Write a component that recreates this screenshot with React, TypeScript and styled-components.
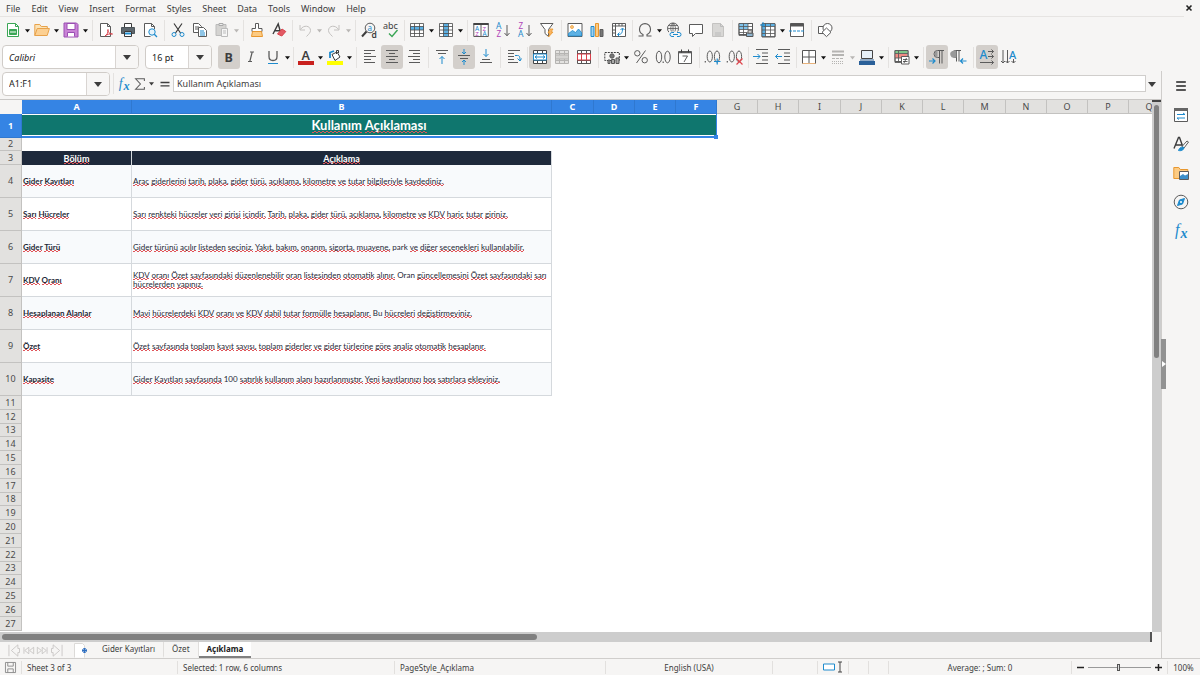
import React from "react";
import styled, { createGlobalStyle, css } from "styled-components";

const ui = '"Noto Sans", sans-serif';
const cellFont = 'Lato, sans-serif';
const ink = "#3d3d3d";
const grey = "#5b5b5b";
const blue = "#1e8bcd";
const accent = "#3584e4";

const GlobalStyle = createGlobalStyle`
  * { box-sizing: border-box; }
  body { margin: 0; background: #f6f5f4; font-family: ${ui}; font-size: 9px; color: ${ink}; overflow: hidden; }
  button, input { font: inherit; color: inherit; }
  button { margin: 0; padding: 0; border: 0; background: none; }
  svg { overflow: visible; }
`;

const Shell = styled.div`
  display: flex;
  flex-direction: column;
  height: 100vh;
`;

const MenuBar = styled.nav`
  display: flex;
  align-items: center;
  gap: 1px;
  height: 17px;
  margin-right: 16px;
  padding-left: 1px;
  border-bottom: 1px solid #e6e4e2;
`;
const MenuItem = styled.button`
  padding: 1px 5px 0;
  line-height: 16px;
`;
const CloseButton = styled.button`
  margin: 0 -12px 0 auto;
  width: 14px;
  height: 14px;
  display: grid;
  place-items: center;
`;

const ToolRow = styled.div`
  display: flex;
  align-items: center;
  height: 26px;
  padding-left: 2px;
`;
const FormatRow = styled(ToolRow)`
  height: 28px;
`;
const Sep = styled.i<{ $narrow?: boolean }>`
  flex: none;
  width: ${(p) => (p.$narrow ? 4 : 6)}px;
  height: 21px;
  background: linear-gradient(#e4e2e0, #e4e2e0) center / 1px 100% no-repeat;
`;
const ToolButton = styled.button<{ $on?: boolean }>`
  flex: none;
  width: 22px;
  height: 24px;
  display: grid;
  place-items: center;
  border-radius: 3px;
  ${(p) => p.$on && css`background: #d3cfcb;`}
`;
const DropButton = styled.button<{ $off?: boolean }>`
  flex: none;
  width: 7px;
  height: 24px;
  display: grid;
  place-items: center;
  color: ${(p) => (p.$off ? "#b9b7b5" : "#111")};
`;
const Combo = styled.div<{ $w: number }>`
  flex: none;
  display: flex;
  width: ${(p) => p.$w}px;
  height: 24px;
  border: 1px solid #d0ccc8;
  border-radius: 4px;
  background: #fff;
  overflow: hidden;
`;
const ComboInput = styled.input<{ $italic?: boolean }>`
  flex: 1;
  min-width: 0;
  border: 0;
  outline: 0;
  padding: 0 6px;
  background: none;
  color: #222;
  font-style: ${(p) => (p.$italic ? "italic" : "normal")};
`;
const ComboArrow = styled.button`
  width: 23px;
  display: grid;
  place-items: center;
  background: #f7f6f5;
  border-left: 1px solid #d9d5d2;
`;
const Gap = styled.i`
  width: 6px;
`;

const Body = styled.div`
  flex: 1;
  min-height: 0;
  display: flex;
`;
const Work = styled.main`
  flex: 1;
  min-width: 0;
  display: flex;
  flex-direction: column;
`;
const FormulaBar = styled.div`
  flex: none;
  display: flex;
  align-items: center;
  height: 29px;
  padding: 0 3px 3px 2px;
  border-bottom: 1px solid #c9c7c5;
`;
const FormulaButton = styled.button<{ $w: number }>`
  flex: none;
  width: ${(p) => p.$w}px;
  height: 20px;
  display: grid;
  place-items: center;
`;
const FormulaInput = styled.input`
  flex: 1;
  min-width: 0;
  height: 17px;
  border: 1px solid #d0cecc;
  background: #fff;
  padding: 0 3px;
  outline: 0;
`;

const SheetArea = styled.div`
  flex: 1;
  min-height: 0;
  display: flex;
`;
const SheetView = styled.div`
  flex: 1;
  min-width: 0;
  overflow: hidden;
  background: #fff;
`;
const Sheet = styled.table`
  table-layout: fixed;
  width: 1170px;
  border-collapse: separate;
  border-spacing: 0;
  td, th { padding: 0; overflow: hidden; }
`;
const Col = styled.col<{ $w: number }>`
  width: ${(p) => p.$w}px;
`;
const Row = styled.tr<{ $h: number }>`
  height: ${(p) => p.$h}px;
`;
const Corner = styled.td`
  background: #f6f5f4;
`;
const head = css<{ $on?: boolean }>`
  font-weight: ${(p) => (p.$on ? 700 : 400)};
  line-height: 12px;
  color: ${(p) => (p.$on ? "#fff" : "#4a4a4a")};
  background: ${(p) => (p.$on ? accent : "#e2e1df")};
  border: 0 solid ${(p) => (p.$on ? "#2f78d0" : "#c3c2c0")};
`;
const ColHead = styled.th<{ $on?: boolean }>`
  ${head}
  border-width: 0 1px 1px 0;
`;
const RowHead = styled.th<{ $on?: boolean }>`
  ${head}
  border-width: 0 1px 1px 0;
`;
const TitleCell = styled.td`
  && { overflow: visible; }
  position: relative;
  background: #0f766e;
  border: solid ${accent};
  border-width: 0 1px 2px 0;
  box-shadow: inset 0 1px #fff, inset 0 -1px #fff;
  color: #fff;
  font: 700 13px/16px ${cellFont};
  text-align: center;
  &::after {
    content: "";
    position: absolute;
    right: -2px;
    bottom: -3px;
    width: 4px;
    height: 4px;
    background: ${accent};
  }
`;
const HeadCell = styled.td`
  background: #1e293b;
  border-right: 1px solid #d5d9dd;
  color: #fff;
  font: 700 9px/11px ${cellFont};
  text-align: center;
`;
const DataCell = styled.td<{ $alt?: boolean; $bold?: boolean }>`
  && { padding: 0 1px; }
  background: ${(p) => (p.$alt ? "#f8fafc" : "#fff")};
  border: solid #d5d9dd;
  border-width: 0 1px 1px 0;
  color: #1f2937;
  font: ${(p) => (p.$bold ? 700 : 400)} 8px/9px ${cellFont};
  vertical-align: middle;
`;
const Misspelt = styled.span`
  --wave: linear-gradient(90deg, #e0555a 50%, transparent 50%);
  background: var(--wave) 0 100% / 4px 1px repeat-x, var(--wave) 2px calc(100% - 1px) / 4px 1px repeat-x;
`;

const VScroll = styled.div`
  flex: none;
  width: 9px;
  background: #cdcdcd;
  border-top: 2px solid #444;
  padding: 3px 2px 0;
`;
const VThumb = styled.div`
  height: 48%;
  border-radius: 3px;
  background: #808080;
`;
const HScroll = styled.div`
  flex: none;
  height: 10px;
  margin-right: 9px;
  background: #cdcdcd;
  border-right: 2px solid #555;
  padding: 2px;
`;
const HThumb = styled.div`
  width: calc(47% - 4px);
  height: 6px;
  border-radius: 3px;
  background: #808080;
`;

const TabBar = styled.div`
  flex: none;
  display: flex;
  align-items: center;
  height: 16px;
  padding-left: 5px;
  font-size: 8px;
`;
const TabNav = styled.button`
  width: 15px;
  height: 14px;
  display: grid;
  place-items: center;
`;
const AddTab = styled.button`
  margin: 0 6px 0 9px;
  width: 14px;
  height: 15px;
`;
const Tab = styled.button<{ $on?: boolean }>`
  height: 16px;
  padding: 0 8px;
  line-height: 14px;
  border-right: 1px solid #e0dedc;
  border-bottom: 2px solid transparent;
  ${(p) => p.$on && css`
    font-weight: 700;
    color: #222;
    background: #fff;
    border-right: 0;
    border-bottom-color: #808080;
  `}
`;

const Deck = styled.aside`
  flex: none;
  position: relative;
  width: 39px;
  border-left: 1px solid #cfcdcb;
  display: flex;
  flex-direction: column;
  align-items: center;
`;
const DeckButton = styled.button`
  width: 24px;
  height: 29px;
  display: grid;
  place-items: center;
`;
const DeckHandle = styled.button`
  position: absolute;
  left: -1px;
  top: 268px;
  width: 5px;
  height: 50px;
  background: #929292;
  display: grid;
  place-items: center;
`;

const StatusBar = styled.footer`
  flex: none;
  display: grid;
  grid-template-columns: 22px 156px 217px minmax(0, 211px) minmax(0, 167px) 45px 31px 20px 20px minmax(0, 183px) 96px 32px;
  align-items: center;
  height: 17px;
  border-top: 1px solid #d0cecc;
  font-size: 8px;
`;
const StatusCell = styled.div<{ $align?: string; $line?: boolean }>`
  display: flex;
  align-items: center;
  justify-content: ${(p) => p.$align || "flex-start"};
  height: 13px;
  padding: 0 5px;
  border-right: 1px solid ${(p) => (p.$line === false ? "transparent" : "#e2e0de")};
  white-space: nowrap;
`;
const Slider = styled.input`
  appearance: none;
  flex: 1;
  min-width: 0;
  margin: 0 4px;
  height: 8px;
  background: linear-gradient(#9a9a9a, #9a9a9a) center / 100% 1px no-repeat;
  &::-webkit-slider-thumb {
    appearance: none;
    width: 3px;
    height: 7px;
    background: #ddd;
    border: 1px solid #555;
  }
`;

type IconProps = { children: React.ReactNode; size?: number };
const Icon = ({ children, size = 16 }: IconProps) => (
  <svg width={size} height={size} viewBox="0 0 16 16" fill="none" stroke={grey} strokeWidth="1" aria-hidden="true">
    {children}
  </svg>
);
const Arrow = ({ w = 5 }: { w?: number }) => (
  <svg width={w} height={w} viewBox="0 0 8 8" aria-hidden="true">
    <path d="M0 2h8L4 7z" fill="currentColor" />
  </svg>
);
const glyph = (s: string, x: number, y: number, size: number, fill: string, extra: React.SVGProps<SVGTextElement> = {}) => (
  <text x={x} y={y} fontSize={size} fill={fill} stroke="none" fontFamily="Noto Sans" {...extra}>{s}</text>
);

const grid = "M1.5 1.5h13v13h-13zM1.5 4.5h13M1.5 8h13M1.5 11.5h13M5.5 1.5v13M10.5 1.5v13";
const lines = (a: number[][]) => a.map(([x1, y, x2]) => `M${x1} ${y}H${x2}`).join("");

const icons: Record<string, React.ReactNode> = {
  new: (<><path d="M2.5 1.5h8l3 3v10h-11z" fill="#fff" stroke="#3aa655" /><path d="M10.5 1.5v3h3" stroke="#3aa655" /><path d="M4.5 7.5h7v5h-7z" fill="#3aa655" stroke="#3aa655" /><path d="M5 10h6" stroke="#fff" /></>),
  open: (<><path d="M.8 13.5v-11h5l1.5 2h6v2" fill="#fbe3b6" stroke="#e8a24a" /><path d="M.8 13.5l2.4-7h12.2l-2.2 7z" fill="#fcd092" stroke="#e8a24a" /></>),
  save: (<><path d="M1 1h12.500l1.500 1.500v12.500H1z" fill="#c983d6" stroke="#9a4fb2" /><path d="M4 1.5h8v6H4z" fill="#fff" stroke="#9a4fb2" /><path d="M4.5 14.5v-4h7v4" fill="#fff" stroke="#9a4fb2" /></>),
  pdf: (<><path d="M2.5 1.5h7l3 3v10h-10z" fill="#fff" /><path d="M9.5 1.5v3h3" /><path d="M7 14c2-1 3.500-4 3-6.500-.8 1.500 1 4.500 4.500 4.500-2.500-.5-5.500.3-7.500 2z" stroke="#d8404a" /></>),
  print: (<><path d="M4.500 5v-3.500h7v3.500" fill="#fff" stroke="#3a3a3a" /><path d="M1.500 5.500h13v6h-13z" fill="#5d666c" stroke="#4c5459" /><path d="M4.500 9.500h7v5h-7z" fill="#fff" stroke="#3a3a3a" /><path d="M5 11.500h6" stroke={blue} strokeWidth="2" /></>),
  preview: (<><path d="M12.500 7v-2.500l-3-3h-7v13h6" fill="#fff" /><path d="M9.500 1.500v3h3" /><circle cx="10" cy="10" r="3.200" fill="#e6f3fb" stroke={blue} /><path d="M12.300 12.300l2.700 2.700" stroke={blue} strokeWidth="1.300" /></>),
  cut: (<><path d="M4 1.500l6.500 9.500M12 1.500L5.500 11" stroke="#3a3a3a" strokeWidth="1.200" /><circle cx="4" cy="12.500" r="2" stroke={blue} /><circle cx="12" cy="12.500" r="2" stroke={blue} /></>),
  copy: (<><path d="M1.500 1.500h5l3 3v6h-8z" fill="#fff" /><path d="M3 5h4M3 7h4" /><path d="M6.500 5.500h5l3 3v6h-8z" fill="#fff" /><path d="M8 9h4M8 11h5M8 13h5" stroke={blue} /></>),
  paste: (<><path d="M2 2.500h10v11H2z" fill="#d4d3d1" stroke="#bbb" /><path d="M5 1.500h4v2H5z" fill="#eee" stroke="#aaa" /><path d="M7.500 6.500h6v8h-6z" fill="#f6f6f6" stroke="#bbb" /><path d="M9 9h3M9 11h3" stroke="#bbb" /></>),
  brush: (<><path d="M6.500 1.500h3v5h3.500v3h-10v-3h3.500z" fill="#fff" /><path d="M3.500 9.500L2.500 14.500h11l-1-5z" fill="#fccb83" stroke="#e8972e" /></>),
  clear: (<><path d="M2 12L7.200 2l2.300 8M4 8.800h5" stroke={ink} strokeWidth="1.400" /><path d="M6.500 12l4.500-5 3.800 2.500-4 4.500z" fill="#e35a64" stroke="#d8404a" /></>),
  undo: <path d="M3 3v5h5M3.500 7.500c3-5 10-4 10 1 0 2-1.500 3.500-4 6" stroke="#c4c2c0" />,
  redo: <path d="M13 3v5H8M12.500 7.500c-3-5-10-4-10 1 0 2 1.500 3.500 4 6" stroke="#c4c2c0" />,
  find: (<><circle cx="9" cy="6" r="4.800" /><path d="M5.500 9.500L1 14.500" strokeWidth="2" stroke={ink} />{glyph("a", 6.500, 8.500, 8, blue)}{glyph("d", 10.500, 15.500, 8.500, ink, { fontWeight: 600 })}</>),
  spell: (<>{glyph("abc", 0, 7, 9, ink)}<path d="M6 11.500l3 3 5.500-6.500" stroke="#3aa655" strokeWidth="1.400" /></>),
  row: (<><path d="M1.500 1.500h13v13h-13z" fill="#fff" stroke="none" /><path d="M1 4.500h14V8H1z" fill="#5db1e4" stroke="none" /><path d={grid} stroke="#4a4a4a" strokeWidth=".8" /></>),
  col: (<><path d="M1.500 1.500h13v13h-13z" fill="#fff" stroke="none" /><path d="M5.500 1h5v14h-5z" fill="#5db1e4" stroke="none" /><path d={grid} stroke="#4a4a4a" strokeWidth=".8" /></>),
  sort: (<><path d="M.8 1.500h14.500v13H.8zM8 2v12.500" fill="#fff" /><path d="M.5 2h15" stroke="#444" strokeWidth="2" />{glyph("A", 2, 8.500, 6.500, blue)}{glyph("Z", 2.300, 14, 6, "#b044b8")}{glyph("Z", 9.500, 8.500, 6, "#b044b8")}{glyph("A", 9.500, 14, 6.500, blue)}</>),
  az: (<>{glyph("A", 1, 6.500, 8.500, blue)}{glyph("Z", 1.500, 15, 8, "#b044b8")}<path d="M12 3v10.500M9.500 11l2.500 2.800 2.500-2.800" /></>),
  za: (<>{glyph("Z", 1.500, 6.500, 8, "#b044b8")}{glyph("A", 1, 15, 8.500, blue)}<path d="M12 3v10.500M9.500 11l2.500 2.800 2.500-2.800" /></>),
  filter: (<><path d="M1.500 1.500h12.500l-4.500 6v7l-3.500-3v-4z" fill="#fff" /><path d="M11 7l-2 4h2l-1.500 4 4.500-5h-2l2-3z" fill="#fbb665" stroke="#e8972e" strokeWidth=".8" /></>),
  image: (<><path d="M1 1.500h14v13H1z" fill="#fff" /><circle cx="5" cy="5" r="1.500" fill="#fccb83" stroke="#e8972e" strokeWidth=".7" /><path d="M1.500 14v-2.500l4-3 3 2 3-3.500 3 3.500V14z" fill="#5db1e4" stroke={blue} strokeWidth=".8" /></>),
  chart: (<><path d="M2 4.500h3v10H2z" fill="#9fd0ee" stroke={blue} /><path d="M6.500 1.500h3v13h-3z" fill="#fccb83" stroke="#e8972e" /><path d="M11 7.500h3v7h-3z" fill="#777" /></>),
  pivot: (<><path d="M1.500 1.500h13v13h-13zM1.500 4h13M4.500 1.500v13M8 1.500V4M11 1.500V4M1.500 8h3M1.500 11h3" fill="#fff" /><path d="M7 12.500c3.500 0 4.500-1.500 4.500-6M9.500 8l2-2 2 2M8.500 10.500l-2 2 2 2" stroke={blue} /></>),
  omega: <path d="M1.500 14h4.500v-1.500c-2.200-1-3.500-3-3.500-5.300C2.500 4 4.900 1.600 8 1.600s5.500 2.400 5.500 5.600c0 2.300-1.300 4.300-3.500 5.300V14h4.500" strokeWidth="1.100" />,
  link: (<><circle cx="7" cy="6.500" r="5.500" /><path d="M1.500 6.500h11M7 1v9M7 1c-3 3-3 8 0 10M7 1c3 3 3 7 1.500 9M2.500 3.500h9" strokeWidth=".8" /><path d="M3 9.500h12v5H3z" fill="#f6f5f4" stroke="none" /><path d="M8 10.500H6a2 2 0 000 4h2M11 10.500h2a2 2 0 010 4h-2M7 12.500h5" stroke={blue} /></>),
  comment: <path d="M1.500 2.500h13v9H7.500L4.500 14.500v-3h-3z" fill="#fff" />,
  page: (<><path d="M2.500 1.500h8l3 3v10h-11z" fill="#d8d7d5" stroke="#c4c3c1" /><path d="M5 11h6M5 13h6M10.500 1.500v3h3" stroke="#bbb" /></>),
  area: (<><path d="M1 1.500h13.500v11H1z" fill="#fff" /><path d="M1 1.500h9v6H1z" fill="#7fc2ea" stroke="none" /><path d="M1 1.500h13.500v12H1zM1 4.500h13.500M1 7.500h13.500M1 10.500h8M5.500 1.500v12M10 1.500v7" strokeWidth=".8" stroke="#555" /><path d="M8.500 11h6.500v3.500H8.500z" fill="#8db4cf" stroke="#555" /><path d="M10 8.800h4V11h-4z" fill="#fff" /></>),
  freeze: (<><path d="M2 2h13v13H2z" fill="#fff" /><path d="M2 1.500h13v3H5.500v10H2z" fill="#5db1e4" stroke="none" /><path d="M2 1.500h13v13H2zM2 4.500h13M2 8h13M2 11.500h13M5.500 1.500v13M10.500 1.500v13" stroke="#555" strokeWidth=".8" /><path d="M0 3h5M3 0v5" stroke={blue} /></>),
  split: (<><path d="M1.500 1.500h13v13h-13z" fill="#fff" /><path d="M1.500 3h13" stroke="#555" strokeWidth="3" /><path d="M0 9h16" stroke={blue} strokeDasharray="3 1" /></>),
  shapes: (<><path d="M1.500 4.500h7v7h-7z" fill="#fff" /><circle cx="10.500" cy="6" r="4.500" fill="#fff" /><path d="M9.500 6l4.500 4.300-4.500 4.300L5 10.300z" fill="#fff" /></>),

  bold: glyph("B", 3.500, 12.500, 12.500, ink, { fontWeight: 700 }),
  italic: <path d="M7 3h4M5 12.500h4M9.200 3L6.800 12.500" strokeWidth="1.200" />,
  underline: (<><path d="M4 2v5.500c0 2.500 1.500 4 4 4s4-1.500 4-4V2" strokeWidth="1.300" /><path d="M3 14.500h10" stroke={blue} /></>),
  fontColor: (<>{glyph("A", 3.500, 10.500, 12.500, ink, { fontWeight: 600 })}<path d="M0 14h16" stroke="#c9211e" strokeWidth="4" /></>),
  highlight: (<><path d="M0 14h16" stroke="#ffff00" strokeWidth="4" /><path d="M3 9V3.500l4-1.500" stroke={blue} strokeWidth="1.800" /><path d="M5 5.500l5-2.500 3 5-5 3.500z" fill="#fff" stroke={ink} /><path d="M9.500 5V1.500h2V4" stroke={ink} /></>),
  left: <path d={lines([[2, 1.500, 13], [2, 4.500, 9], [2, 7.500, 14], [2, 10.500, 9], [2, 13.500, 13]])} />,
  center: <path d={lines([[2, 1.500, 14], [5, 4.500, 11], [2, 7.500, 14], [5, 10.500, 11], [2, 13.500, 14]])} />,
  right: <path d={lines([[3, 1.500, 14], [7, 4.500, 14], [2, 7.500, 14], [7, 10.500, 14], [3, 13.500, 14]])} />,
  top: (<><path d={lines([[2, 1.500, 14], [4, 4.500, 12]])} /><path d="M8 15V7.500M5.500 10L8 7.500l2.500 2.500" stroke={blue} /></>),
  middle: (<><path d={lines([[2, 6.500, 14], [4, 9.500, 12]])} /><path d="M8 0v5M6 3l2 2 2-2M8 16v-5M6 13l2-2 2 2" stroke={blue} /></>),
  bottom: (<><path d={lines([[4, 10.500, 12], [2, 13.500, 14]])} /><path d="M8 0v7.500M5.500 5L8 7.500 10.500 5" stroke={blue} /></>),
  wrap: (<><path d={lines([[2, 1.500, 14], [2, 4.500, 8], [2, 7.500, 8], [2, 10.500, 8], [2, 13.500, 12]])} /><path d="M9 6.500h2.500c2 0 2.500 1 2.500 5M11.500 9.500l2.500 2.500 1.500-2.500" stroke={blue} /></>),
  merge: (<><path d={grid} fill="#fff" stroke="#444" /><path d="M1.500 5h13v6h-13z" fill="#fff" stroke={blue} /><path d="M3 8h10M5 6.500L3 8l2 1.500M11 6.500L13 8l-2 1.500" stroke={blue} /></>),
  mergeOff: (<><path d={grid} fill="#e3e2e0" stroke="#b5b4b2" /><path d="M1.500 6h13v4h-13z" fill="#d5d4d2" stroke="#b5b4b2" /></>),
  unmerge: (<><path d={grid} fill="#fff" stroke="#555" /><path d="M1.500 5h13v6h-13zM5.500 5v6M10.500 5v6" fill="#fff" stroke="#d8404a" /></>),
  currency: (<><path d="M.8 3.500h14.500v8H.8z" strokeDasharray="2 1" stroke={ink} /><circle cx="8" cy="7" r="2.200" fill="#777" /><path d="M4 11h2v3.500H4zM7.500 10.500h3v4h-3zM12 9h3v5.500h-3z" fill="#aaa" stroke="#555" /></>),
  percent: (<><circle cx="4.300" cy="4.300" r="2.700" /><circle cx="11.700" cy="11.200" r="2.700" /><path d="M12.500 1.500L3.500 14" /></>),
  decimal: (<><ellipse cx="4" cy="8" rx="2.700" ry="5.800" /><ellipse cx="12.500" cy="8" rx="2.700" ry="5.800" /><path d="M8.200 12.500v1.500" strokeWidth="1.200" /></>),
  date: (<><path d="M1.500 2.500h13v12h-13z" fill="#fff" /><path d="M1.500 3.500h13" strokeWidth="1.600" /><path d="M4.500 .5v3M11.500 .5v3" stroke={ink} /><path d="M5.500 7h5l-3.500 6" /></>),
  decAdd: (<><path d="M.3 12v1.500" strokeWidth="1.200" /><ellipse cx="4.800" cy="7.500" rx="2.600" ry="5.500" /><ellipse cx="12" cy="7.500" rx="2.600" ry="5.500" /><path d="M9 12.500h6.500M12.200 9.500v6" stroke={blue} strokeWidth="1.200" /></>),
  decDel: (<><path d="M.3 12v1.500" strokeWidth="1.200" /><ellipse cx="4.800" cy="7.500" rx="2.600" ry="5.500" /><ellipse cx="12" cy="7.500" rx="2.600" ry="5.500" /><path d="M9.500 9.500l6 6M15.500 9.500l-6 6" stroke="#e0444c" strokeWidth="1.200" /></>),
  indent: (<><path d={lines([[3, .5, 15], [9, 4, 15], [9, 7.500, 15], [9, 11, 15], [3, 14.500, 15]])} /><path d="M0 7.500h7M4.500 5L7 7.500 4.500 10" stroke={blue} /></>),
  outdent: (<><path d={lines([[3, .5, 15], [9, 4, 15], [9, 7.500, 15], [9, 11, 15], [3, 14.500, 15]])} /><path d="M7 7.500H.5M3 5L.5 7.500 3 10" stroke={blue} /></>),
  border: (<><path d="M1.500 1.500h13v13h-13z" fill="#fff" stroke="#555" /><path d="M8 2v12.500M2 8h12.500" stroke="#555" /><path d="M1.500 14.500h13" stroke="#e8b27a" /></>),
  lineStyle: (<><path d="M2 2.500h12M2 6h12" stroke="#b5b4b2" strokeWidth="2" /><path d="M2 9.500h12" stroke="#b5b4b2" strokeDasharray="3 1" /><path d="M2 12.500h12M2 14.500h12" stroke="#b5b4b2" strokeDasharray="1 1" /></>),
  borderColor: (<><path d="M0 14h16" stroke="#2a6099" strokeWidth="4" /><path d="M2.500 1.500h11v8h-11z" fill="#e6f0f8" stroke="#444" /><path d="M1 11h14" stroke="#2a6099" /></>),
  cond: (<><path d="M1 1.500h13v11H1z" fill="#fff" /><path d="M1 1.500h12.500v3H1z" fill="#7fc88a" stroke="none" /><path d="M1 5h12v4H1z" fill="#ef8b84" stroke="none" /><path d="M1 1.500h13v12H1zM1 4.500h13M1 9h13M4.500 1.500v12" strokeWidth=".9" /><path d="M7.500 7.500h7.500v7.500H7.500z" fill="#fff" /><path d="M9 10.500h4.500M9 12.500h4.500M12.500 9l-2.500 5" strokeWidth=".8" stroke={ink} /></>),
  ltr: (<><path d="M15 1.500H8.500a3.500 3.500 0 000 7h2M10.500 1.500v13M13 1.500v13" /><path d="M8.500 2a3 3 0 000 6z" fill="#999" stroke="none" /><path d="M0 12h6M3.500 9.500L6 12l-2.500 2.500" stroke={blue} strokeWidth="1.200" /></>),
  rtl: (<><path d="M10 1.500H4.500a3.500 3.500 0 000 7H5.500M5.500 1.500v11M8 1.500v11" /><path d="M1.500 2H5.500v6.500H4a3.200 3.200 0 01-2.500-6.500z" fill="#999" stroke="none" /><path d="M15.500 12H9.500M12 9.500L9.500 12l2.500 2.500" stroke={blue} strokeWidth="1.200" /></>),
  horiz: (<>{glyph("A", 0.500, 10, 12, blue, { fontWeight: 500 })}<path d="M9 2.500h5.500M12.500 .5l2 2-2 2M9 7.500h5.500M12.500 5.500l2 2-2 2M1 13.500h13.500M12.500 11.500l2 2-2 2" /></>),
  vert: (<><path d="M2 1v13M0 12l2 2 2-2M6.500 1v13M4.500 12l2 2 2-2M12.500 10v4M10.500 12l2 2 2-2" />{glyph("A", 8, 9.500, 11, blue, { fontWeight: 500 })}</>),

  fx: <>{glyph("f", 2, 12, 16, blue, { fontStyle: "italic", fontFamily: "Liberation Serif" })}{glyph("x", 7.500, 15, 14, blue, { fontStyle: "italic", fontWeight: 700, fontFamily: "Liberation Serif" })}</>,
  sigma: <path d="M13 4.500V2H3l5.500 6L3 14h10v-2.500" strokeWidth="1.200" />,
  equals: <path d="M2 6h12M2 10.500h12" stroke={ink} strokeWidth="1.800" />,
  burger: <path d="M2.500 3.500h11M2.500 8h11M2.500 12.500h11" stroke="#222" strokeWidth="1.600" />,
  props: (<><path d="M1.500 1.500h13v13h-13z" fill="#fff" /><path d="M1 2.500h14" strokeWidth="3" stroke="#666" /><path d="M4 7.500h8M4 11h8M10 6l2 1.500M6 12.500L4 11" stroke={blue} /></>),
  styles: (<><path d="M1 12.500L5.500 1.500h1l4 11M2.800 9h6" stroke={ink} strokeWidth="1.400" /><path d="M9 10.500l5-5.500 1.500 1-4.500 6z" fill="#fff" /><path d="M5.500 14.500c1-3 3-4 5.500-3-.5 3-3 3.500-5.500 3z" fill={blue} stroke={blue} /></>),
  gallery: (<><path d="M.8 13.500v-11h5l1.500 2h7.500v9z" fill="#fccb83" stroke="#e8972e" /><path d="M6.500 6.500h9v8h-9z" fill="#fff" /><path d="M7 14v-3l3-2 2 1.500 3-1.500v5z" fill="#3d8fc9" stroke="none" /></>),
  navigator: (<><circle cx="8" cy="8" r="6.800" /><path d="M11.500 4.500l-2 5.500-5 1.500 2-5.500z" fill={blue} stroke={blue} /><circle cx="8" cy="8" r="1" fill="#fff" stroke="none" /></>),
};

type Tool = { id: string; label: string; on?: boolean; drop?: boolean; off?: boolean } | "|" | "!";
const t = (id: string, label: string, flags = ""): Tool => ({
  id, label, on: flags.includes("o"), drop: flags.includes("d"), off: flags.includes("x"),
});

const standard: Tool[] = [
  t("new", "New", "d"), t("open", "Open", "d"), t("save", "Save", "d"), "|",
  t("pdf", "Export as PDF"), t("print", "Print"), t("preview", "Print Preview"), "|",
  t("cut", "Cut"), t("copy", "Copy"), t("paste", "Paste", "dx"), "|",
  t("brush", "Clone Formatting"), t("clear", "Clear Formatting"), "!",
  t("undo", "Undo", "dx"), t("redo", "Redo", "dx"), "|",
  t("find", "Find and Replace"), t("spell", "Spelling"), "!",
  t("row", "Row", "d"), t("col", "Column", "d"), "|",
  t("sort", "Sort"), t("az", "Sort Ascending"), t("za", "Sort Descending"), t("filter", "AutoFilter"), "|",
  t("image", "Image"), t("chart", "Chart"), t("pivot", "Pivot Table"), "!",
  t("omega", "Special Character", "d"), t("link", "Hyperlink"), t("comment", "Comment"), t("page", "Headers and Footers"), "|",
  t("area", "Print Area"), t("freeze", "Freeze", "d"), t("split", "Split Window"), "|",
  t("shapes", "Draw Functions"),
];
const formatting: Tool[] = [
  t("bold", "Bold", "o"), t("italic", "Italic"), t("underline", "Underline", "d"), "!",
  t("fontColor", "Font Color", "d"), t("highlight", "Highlighting", "d"), "|",
  t("left", "Align Left"), t("center", "Align Center", "o"), t("right", "Align Right"), "|",
  t("top", "Align Top"), t("middle", "Center Vertically", "o"), t("bottom", "Align Bottom"), "|",
  t("wrap", "Wrap Text"), "!",
  t("merge", "Merge and Center", "o"), t("mergeOff", "Merge"), t("unmerge", "Unmerge"), "|",
  t("currency", "Currency", "d"), t("percent", "Percent"), t("decimal", "Number"), t("date", "Date"), "|",
  t("decAdd", "Add Decimal"), t("decDel", "Delete Decimal"), "!",
  t("indent", "Increase Indent"), t("outdent", "Decrease Indent"), "!",
  t("border", "Borders", "d"), t("lineStyle", "Border Style", "dx"), t("borderColor", "Border Color", "d"), "|",
  t("cond", "Conditional", "d"), "|",
  t("ltr", "Left to Right", "o"), t("rtl", "Right to Left"), "|",
  t("horiz", "Horizontal Text", "o"), t("vert", "Vertical Text"),
];

const Tools = ({ items }: { items: Tool[] }) => (
  <>
    {items.map((it, i) =>
      typeof it === "string" ? (
        <Sep key={i} $narrow={it === "!"} />
      ) : (
        <React.Fragment key={i}>
          <ToolButton $on={it.on} aria-label={it.label}><Icon>{icons[it.id]}</Icon></ToolButton>
          {it.drop && <DropButton $off={it.off} aria-label={`${it.label} options`}><Arrow /></DropButton>}
        </React.Fragment>
      )
    )}
  </>
);

const menus = ["File", "Edit", "View", "Insert", "Format", "Styles", "Sheet", "Data", "Tools", "Window", "Help"];
const columns: [string, number][] = [
  ["A", 110], ["B", 420], ["C", 42], ["D", 41], ["E", 41], ["F", 41], ["G", 41], ["H", 41], ["I", 42],
  ["J", 41], ["K", 41], ["L", 41], ["M", 42], ["N", 41], ["O", 41], ["P", 41], ["Q", 41],
];
const entries = [
  ["Gider Kayıtları", "Araç giderlerini tarih, plaka, gider türü, açıklama, kilometre ve tutar bilgileriyle kaydediniz."],
  ["Sarı Hücreler", "Sarı renkteki hücreler veri girişi içindir. Tarih, plaka, gider türü, açıklama, kilometre ve KDV hariç tutar giriniz."],
  ["Gider Türü", "Gider türünü açılır listeden seçiniz. Yakıt, bakım, onarım, sigorta, muayene, park ve diğer seçenekleri kullanılabilir."],
  ["KDV Oranı", "KDV oranı Özet sayfasındaki düzenlenebilir oran listesinden otomatik alınır. Oran güncellemesini Özet sayfasındaki sarı hücrelerden yapınız."],
  ["Hesaplanan Alanlar", "Mavi hücrelerdeki KDV oranı ve KDV dahil tutar formülle hesaplanır. Bu hücreleri değiştirmeyiniz."],
  ["Özet", "Özet sayfasında toplam kayıt sayısı, toplam giderler ve gider türlerine göre analiz otomatik hesaplanır."],
  ["Kapasite", "Gider Kayıtları sayfasında 100 satırlık kullanım alanı hazırlanmıştır. Yeni kayıtlarınızı boş satırlara ekleyiniz."],
];
const correct = new Set(["park", "Oran", "100", "Bu"]);

const Checked = ({ text }: { text: string }) => (
  <>
    {text.split(" ").map((w, i) => (
      <React.Fragment key={i}>
        {i > 0 && " "}
        {correct.has(w) ? w : <Misspelt>{w}</Misspelt>}
      </React.Fragment>
    ))}
  </>
);

const emptyRows = Array.from({ length: 17 }, (_, i) => i + 11);

export default function App() {
  return (
    <Shell>
      <GlobalStyle />
      <MenuBar>
        {menus.map((m) => <MenuItem key={m}>{m}</MenuItem>)}
        <CloseButton aria-label="Close document">
          <svg width="6" height="6" viewBox="0 0 6 6" stroke="#222" strokeWidth="1.600"><path d="M.5.5l5 5M5.500.5l-5 5" /></svg>
        </CloseButton>
      </MenuBar>
      <ToolRow><Tools items={standard} /></ToolRow>
      <FormatRow>
        <Combo $w={137}>
          <ComboInput $italic aria-label="Font name" defaultValue="Calibri" />
          <ComboArrow aria-label="Show fonts"><Arrow w={8} /></ComboArrow>
        </Combo>
        <Gap />
        <Combo $w={67}>
          <ComboInput aria-label="Font size" defaultValue="16 pt" />
          <ComboArrow aria-label="Show sizes"><Arrow w={8} /></ComboArrow>
        </Combo>
        <Gap />
        <Tools items={formatting} />
      </FormatRow>
      <Body>
        <Work>
          <FormulaBar>
            <Combo $w={108}>
              <ComboInput aria-label="Name box" defaultValue="A1:F1" />
              <ComboArrow aria-label="Show names"><Arrow w={8} /></ComboArrow>
            </Combo>
            <Sep />
            <FormulaButton $w={16} aria-label="Function wizard"><Icon size={14}>{icons.fx}</Icon></FormulaButton>
            <FormulaButton $w={15} aria-label="Select function"><Icon size={14}>{icons.sigma}</Icon></FormulaButton>
            <FormulaButton $w={9} aria-label="Function options"><Arrow /></FormulaButton>
            <FormulaButton $w={17} aria-label="Formula"><Icon size={12}>{icons.equals}</Icon></FormulaButton>
            <FormulaInput aria-label="Input line" defaultValue="Kullanım Açıklaması" />
            <FormulaButton $w={12} aria-label="Expand formula bar"><Arrow w={8} /></FormulaButton>
          </FormulaBar>
          <SheetArea>
            <SheetView>
              <Sheet>
                <colgroup>
                  <Col $w={22} />
                  {columns.map(([c, w]) => <Col key={c} $w={w} />)}
                </colgroup>
                <thead>
                  <Row $h={14}>
                    <Corner />
                    {columns.map(([c], i) => <ColHead key={c} scope="col" $on={i < 6}>{c}</ColHead>)}
                  </Row>
                </thead>
                <tbody>
                  <Row $h={24}>
                    <RowHead scope="row" $on>1</RowHead>
                    <TitleCell colSpan={6}><Checked text="Kullanım Açıklaması" /></TitleCell>
                  </Row>
                  <Row $h={13}><RowHead scope="row">2</RowHead></Row>
                  <Row $h={14}>
                    <RowHead scope="row">3</RowHead>
                    <HeadCell><Checked text="Bölüm" /></HeadCell>
                    <HeadCell><Checked text="Açıklama" /></HeadCell>
                  </Row>
                  {entries.map(([a, b], i) => (
                    <Row key={a} $h={33}>
                      <RowHead scope="row">{i + 4}</RowHead>
                      <DataCell $bold $alt={i % 2 === 0}><Checked text={a} /></DataCell>
                      <DataCell $alt={i % 2 === 0}><Checked text={b} /></DataCell>
                    </Row>
                  ))}
                  {emptyRows.map((n) => (
                    <Row key={n} $h={n % 5 === 3 ? 13 : 14}><RowHead scope="row">{n}</RowHead></Row>
                  ))}
                </tbody>
              </Sheet>
            </SheetView>
            <VScroll><VThumb /></VScroll>
          </SheetArea>
          <HScroll><HThumb /></HScroll>
          <TabBar>
            {["M3 1v14M14 1L6 8l8 7V10.500h2V5.500h-2z", "M3 4v8M9 4L4 8l5 4zM15 4l-5 4 5 4z", "M13 4v8M7 4l5 4-5 4zM1 4l5 4-5 4z", "M13 1v14M2 1l8 7-8 7V10.500H0V5.500h2z"].map((d, i) => (
              <TabNav key={i} aria-label={["First sheet", "Previous sheet", "Next sheet", "Last sheet"][i]}>
                <svg width="14" height="13" viewBox="0 0 16 16" fill="none" stroke="#c4c2c0"><path d={d} /></svg>
              </TabNav>
            ))}
            <AddTab aria-label="Add sheet">
              <svg width="14" height="15" viewBox="0 0 14 15">
                <path d="M.5 14.500V.5h8l2 2v12" fill="#fff" stroke="#dcdad8" />
                <circle cx="10.500" cy="7.500" r="2" fill="#fff" stroke="#2f6fc0" />
                <path d="M10.500 5v5M8 7.500h5" stroke="#2f6fc0" />
              </svg>
            </AddTab>
            <Tab>Gider Kayıtları</Tab>
            <Tab>Özet</Tab>
            <Tab $on>Açıklama</Tab>
          </TabBar>
        </Work>
        <Deck>
          {[["burger", "Sidebar Settings"], ["props", "Properties"], ["styles", "Styles"], ["gallery", "Gallery"], ["navigator", "Navigator"], ["fx", "Functions"]].map(([id, label]) => (
            <DeckButton key={id} aria-label={label}><Icon size={id === "burger" ? 14 : 16}>{icons[id]}</Icon></DeckButton>
          ))}
          <DeckHandle aria-label="Hide sidebar">
            <svg width="4" height="6" viewBox="0 0 4 6"><path d="M0 0l4 3-4 3z" fill="#fff" /></svg>
          </DeckHandle>
        </Deck>
      </Body>
      <StatusBar>
        <StatusCell $align="center">
          <svg width="11" height="11" viewBox="0 0 12 12" fill="none" stroke="#8a8a8a"><path d="M.5.5h11v11H.5zM3 .5v4h6v-4M3 11.500v-4h6v4" /></svg>
        </StatusCell>
        <StatusCell>Sheet 3 of 3</StatusCell>
        <StatusCell>Selected: 1 row, 6 columns</StatusCell>
        <StatusCell>PageStyle_Açıklama</StatusCell>
        <StatusCell $align="center">English (USA)</StatusCell>
        <StatusCell />
        <StatusCell $align="center">
          <svg width="20" height="12" viewBox="0 0 20 12" fill="none"><path d="M.5 3h11v6H.5z" stroke={blue} fill="#fff" /><path d="M15 1h4M17 1v10M15 11h4" stroke="#444" /></svg>
        </StatusCell>
        <StatusCell />
        <StatusCell />
        <StatusCell $align="center">Average: ; Sum: 0</StatusCell>
        <StatusCell>
          <svg width="7" height="7" viewBox="0 0 7 7"><path d="M0 3.500h7" stroke="#222" strokeWidth="1.500" /></svg>
          <Slider type="range" aria-label="Zoom" min={0} max={100} defaultValue={49} />
          <svg width="7" height="7" viewBox="0 0 7 7"><path d="M0 3.500h7M3.500 0v7" stroke="#222" strokeWidth="1.500" /></svg>
        </StatusCell>
        <StatusCell $line={false} $align="center">100%</StatusCell>
      </StatusBar>
    </Shell>
  );
}
